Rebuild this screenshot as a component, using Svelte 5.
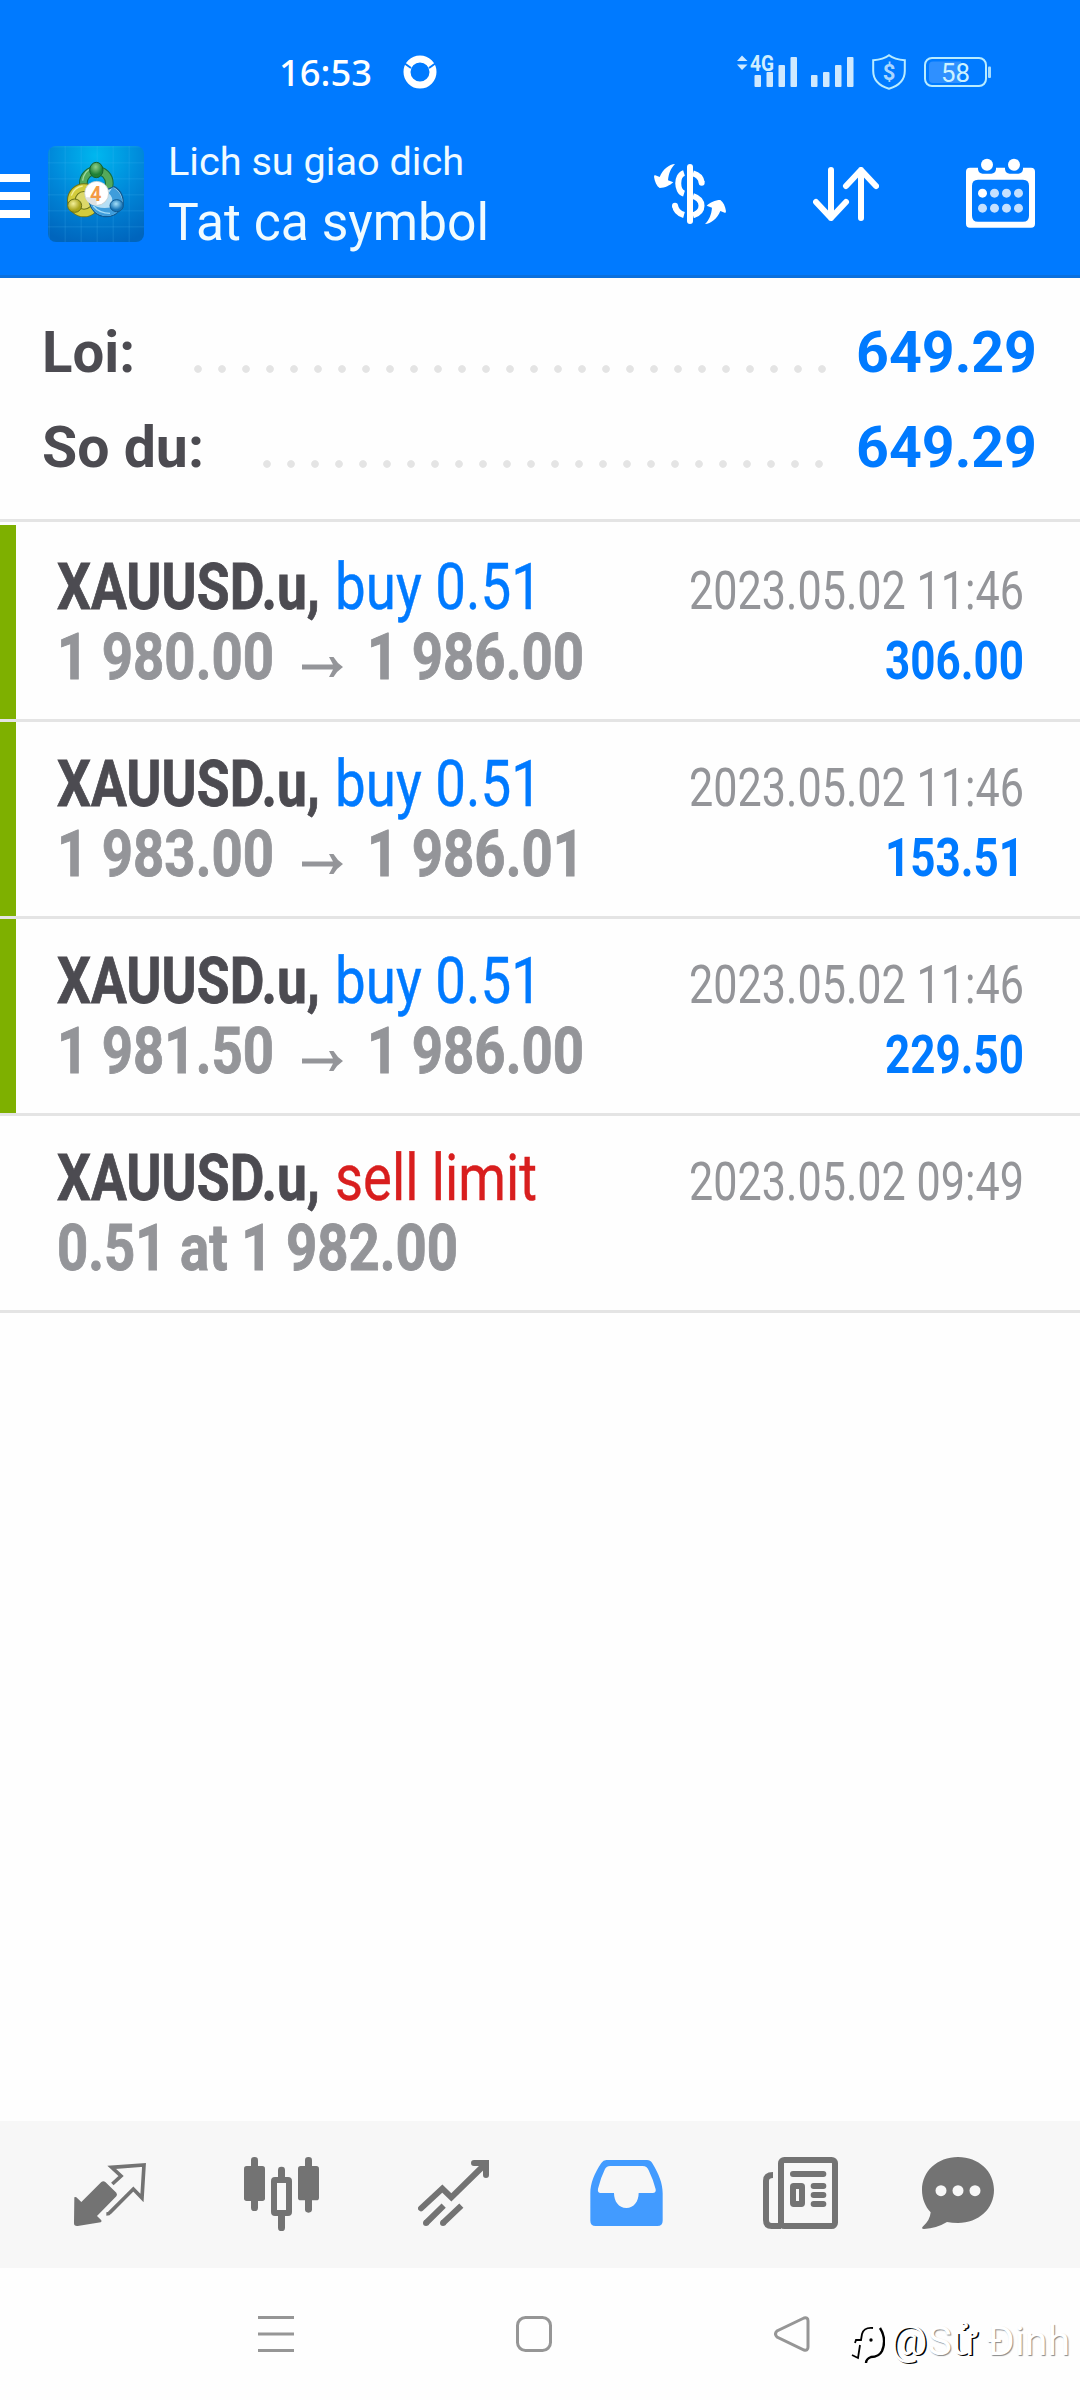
<script>
  const summary = [
    { label: 'Loi:', width: 93, value: '649.29' },
    { label: 'So du:', width: 162, value: '649.29', short: true },
  ];

  const deals = [
    { side: 'buy 0.51', sideWidth: 207, open: '1 980.00', close: '1 986.00', time: '2023.05.02 11:46', profit: '306.00' },
    { side: 'buy 0.51', sideWidth: 207, open: '1 983.00', close: '1 986.01', time: '2023.05.02 11:46', profit: '153.51' },
    { side: 'buy 0.51', sideWidth: 207, open: '1 981.50', close: '1 986.00', time: '2023.05.02 11:46', profit: '229.50' },
    { side: 'sell limit', sideWidth: 202, sell: true, note: '0.51 at 1 982.00', time: '2023.05.02 09:49' },
  ];
</script>

<!-- One line of condensed text; the box is as tall as the capitals. -->
{#snippet line(text, width, height, kind)}
  <svg class="line {kind}" {width} {height}>
    <text x="0" y={height} textLength={width} lengthAdjust="spacingAndGlyphs">{text}</text>
  </svg>
{/snippet}

<div class="screen">
  <header>
    <div class="status">
      <div class="clock">
        {@render line('16:53', 93, 27, 'time')}
        <svg class="ring" width="34" height="34" viewBox="0 0 34 34">
          <circle cx="17" cy="17" r="13" fill="none" stroke="#fff" stroke-width="7" />
          <path d="M1 8l7 5M33 8l-7 5" stroke="#007aff" stroke-width="2" />
        </svg>
      </div>
      <div class="signals">
        <svg width="60" height="36" viewBox="0 0 60 36" fill="#cfe9ff">
          <path d="M0 7L5 1.500L10.500 7zM0 10.500H10.500L5 16z" />
          <text class="net" x="13" y="17" textLength="24" lengthAdjust="spacingAndGlyphs">4G</text>
          <rect x="17.500" y="21" width="6.500" height="12" rx="1" />
          <rect x="29.500" y="18" width="6.500" height="15" rx="1" />
          <rect x="41.500" y="11" width="6.500" height="22" rx="1" />
          <rect x="53.500" y="3" width="6.500" height="30" rx="1" />
        </svg>
        <svg width="43" height="36" viewBox="0 0 43 36" fill="#cfe9ff">
          <rect x="0" y="21" width="6.500" height="12" rx="1" />
          <rect x="12" y="18" width="6.500" height="15" rx="1" />
          <rect x="24" y="11" width="6.500" height="22" rx="1" />
          <rect x="36" y="3" width="6.500" height="30" rx="1" />
        </svg>
        <svg width="34" height="36" viewBox="0 0 34 36">
          <path d="M17 1.200C13 4.200 8 5.600 1.200 6.200V17C1.200 26 8 32 17 34.800C26 32 32.800 26 32.800 17V6.200C26 5.600 21 4.200 17 1.200Z" fill="none" stroke="#b9ecff" stroke-width="2" />
          <text class="coin" x="17" y="25.500" text-anchor="middle">$</text>
        </svg>
        <svg width="68" height="36" viewBox="0 0 68 36">
          <rect x="1" y="4" width="61" height="28" rx="7" fill="none" stroke="#b9ecff" stroke-width="2" />
          <path d="M9 7.500H37V29H9Q5 29 5 25V11.500Q5 7.500 9 7.500Z" fill="#2f90ff" />
          <rect x="64" y="12.500" width="3" height="11.500" rx="1" fill="#a5dcff" />
          <text class="level" x="17" y="27.700" textLength="29" lengthAdjust="spacingAndGlyphs">58</text>
        </svg>
      </div>
    </div>

    <div class="appbar">
      <svg class="menu" width="30" height="44" viewBox="0 0 30 44" fill="#fff">
        <path d="M0 0h30v8H0zM0 18h30v8H0zM0 36h30v8H0z" />
      </svg>
      <svg class="logo" width="96" height="96" viewBox="54 48 288 288">
        <defs>
          <radialGradient id="sky" cx="50%" cy="10%" r="95%">
            <stop offset="0" stop-color="#00b7ef" />
            <stop offset=".5" stop-color="#0089da" />
            <stop offset="1" stop-color="#0065bd" />
          </radialGradient>
          <pattern id="grid" x="56" y="49" width="48" height="48" patternUnits="userSpaceOnUse">
            <path d="M0 1H48M1 0V48" stroke="#4db8f0" stroke-opacity=".35" stroke-width="2" />
          </pattern>
          <radialGradient id="green" cx="45%" cy="30%"><stop offset="0" stop-color="#8fd08b" /><stop offset="1" stop-color="#1f8136" /></radialGradient>
          <radialGradient id="yellow" cx="40%" cy="35%"><stop offset="0" stop-color="#f4f09a" /><stop offset="1" stop-color="#aaa41a" /></radialGradient>
          <radialGradient id="blue" cx="45%" cy="35%"><stop offset="0" stop-color="#a5e0fa" /><stop offset="1" stop-color="#1673b5" /></radialGradient>
        </defs>
        <rect x="54" y="48" width="288" height="288" rx="24" fill="url(#sky)" />
        <rect x="54" y="48" width="288" height="288" rx="24" fill="url(#grid)" />
        <circle cx="199" cy="160" r="39" fill="none" stroke="#176b38" stroke-width="26" />
        <circle cx="199" cy="160" r="39" fill="none" stroke="#54a95b" stroke-width="20" />
        <path d="M158 152Q162 123 184 116" fill="none" stroke="#a0d8a0" stroke-width="4" />
        <circle cx="162" cy="211" r="38" fill="#dcd86a" stroke="#6c7418" stroke-width="26" />
        <circle cx="162" cy="211" r="38" fill="none" stroke="#d3cc3c" stroke-width="20" />
        <path d="M124 197Q132 172 158 168" fill="none" stroke="#f2ee9a" stroke-width="4" />
        <path d="M205 190L252 170A51 51 0 0 1 278 228Q260 262 222 260Q188 254 178 218Z" fill="#b5dff5" stroke="#105a92" stroke-width="4" />
        <path d="M248 172A51 51 0 0 1 276 228L246 222Q250 200 236 190Z" fill="#3f9ddb" />
        <path d="M180 218Q206 240 244 232L266 244Q244 262 218 257Q188 249 180 218Z" fill="#3f9ddb" />
        <path d="M190 228Q208 250 240 250" fill="none" stroke="#a3dcf7" stroke-width="4" />
        <ellipse cx="199" cy="120" rx="20" ry="23" fill="url(#green)" stroke="#17602d" stroke-width="3" />
        <ellipse cx="134" cy="227" rx="21" ry="20" fill="url(#yellow)" stroke="#6c7418" stroke-width="3" />
        <ellipse cx="260" cy="227" rx="20" ry="18" fill="url(#blue)" stroke="#105a92" stroke-width="3" />
        <circle cx="200" cy="190" r="36" fill="#fff" stroke="#b9c4c4" stroke-width="2" />
        <path d="M164 202H200V226A36 36 0 0 1 166 202Z" fill="#dfe1e2" />
        <text class="four" x="197" y="212" text-anchor="middle">4</text>
      </svg>
      <div class="titles">
        {@render line('Lich su giao dich', 296, 28, 'subtitle')}
        {@render line('Tat ca symbol', 321, 36.5, 'title')}
      </div>
      <div class="actions">
        <svg width="72" height="60" viewBox="102 402 216 180" fill="none" stroke="#fff" stroke-width="18">
          <path d="M210 411V573" stroke-linecap="round" />
          <path d="M192 429C169 436 169 484 192 491M219 498C253 509 253 546 219 556" />
          <path d="M219 430C234 434 243 444 245 457" />
          <circle cx="245" cy="458" r="9" fill="#fff" stroke="none" />
          <path d="M165 526C167 542 178 551 192 555" />
          <circle cx="165" cy="527" r="9" fill="#fff" stroke="none" />
          <path id="swing" d="M165 402C148 403 128 418 119 441L104 435L102 440C104 455 110 468 119 474C135 474 150 466 160 457L144 451C146 430 152 415 165 402Z" fill="#fff" stroke="none" />
          <use href="#swing" transform="rotate(180 210 492)" />
        </svg>
        <svg width="66" height="54" viewBox="579 411 198 162" fill="none" stroke="#fff" stroke-width="18" stroke-linecap="round" stroke-linejoin="round">
          <path d="M633 420V564M588 516L633 564L678 516M723 564V420M678 468L723 420L768 468" />
        </svg>
        <svg width="69" height="72" viewBox="1038 382 207 216" fill="#fff">
          <path fill-rule="evenodd" d="M1050 411H1074V416Q1076 429 1088 429H1114Q1126 429 1128 416V411H1155V416Q1157 429 1169 429H1195Q1207 429 1209 416V411H1233Q1245 411 1245 423V579Q1245 591 1233 591H1050Q1038 591 1038 579V423Q1038 411 1050 411ZM1074 447Q1056 447 1056 465V555Q1056 573 1074 573H1209Q1227 573 1227 555V465Q1227 447 1209 447Z" />
          <circle cx="1101" cy="402" r="18" /><circle cx="1182" cy="402" r="18" />
          <circle cx="1087.500" cy="487.500" r="13.500" />
          <g fill="#c4e0ff">
            <circle cx="1123.500" cy="487.500" r="13.500" /><circle cx="1159.500" cy="487.500" r="13.500" /><circle cx="1195.500" cy="487.500" r="13.500" />
            <circle cx="1087.500" cy="532.500" r="13.500" /><circle cx="1123.500" cy="532.500" r="13.500" /><circle cx="1159.500" cy="532.500" r="13.500" /><circle cx="1195.500" cy="532.500" r="13.500" />
          </g>
        </svg>
      </div>
    </div>
  </header>

  <section class="summary">
    {#each summary as item}
      <div class="total">
        {@render line(item.label, item.width, 41, 'label')}
        <i class="leader" class:short={item.short}></i>
        {@render line(item.value, 181, 41, 'value')}
      </div>
    {/each}
  </section>

  <main>
    {#each deals as deal}
      <article class:marked={!deal.sell}>
        <div class="row">
          {@render line('XAUUSD.u,', 263, 46, 'symbol')}
          {@render line(deal.side, deal.sideWidth, 46, deal.sell ? 'sell' : 'buy')}
          {@render line(deal.time, 335, 38, 'date')}
        </div>
        <div class="row second">
          {#if deal.note}
            {@render line(deal.note, 401, 46, 'price')}
          {:else}
            {@render line(deal.open, 217, 46, 'price')}
            <svg class="arrow" width="41" height="20" viewBox="0 0 41 20" fill="#949599">
              <path d="M0 7.500H31L27 0H31.500Q35 6 41 10Q35 14 31.500 20H27L31 12.500H0Z" />
            </svg>
            {@render line(deal.close, 217, 46, 'price')}
            {@render line(deal.profit, 139, 38, 'profit')}
          {/if}
        </div>
      </article>
    {/each}
  </main>

  <nav class="tabs">
    <svg width="72" height="74" viewBox="102 141 216 222" fill="#737373">
      <path d="M103 262Q106 260 109 262L124 276L184 216Q190 211 196 216L229 248Q233 254 229 259L171 318L184 331Q186 335 182 337L113 348Q102 349 102 340Z" />
      <path d="M217 222L243 198L215 172L312 165L306 264L280 237L210 307Q207 312 199 312" fill="none" stroke="#737373" stroke-width="11" />
    </svg>
    <svg width="75" height="74" viewBox="612 141 225 222" fill="#737373">
      <rect x="612" y="168" width="63" height="105" rx="8" /><rect x="633" y="141" width="21" height="162" rx="10" />
      <rect x="774" y="168" width="63" height="103" rx="8" /><rect x="795" y="141" width="21" height="167" rx="10" />
      <rect x="714" y="170" width="21" height="60" rx="10" /><rect x="714" y="300" width="21" height="63" rx="10" />
      <rect x="702" y="210" width="45" height="99" rx="3" fill="#f7f7f7" stroke="#737373" stroke-width="18" />
      <rect x="711" y="219" width="27" height="81" rx="9" fill="#f7f7f7" />
    </svg>
    <svg width="71" height="74" viewBox="1134 141 213 222" fill="none" stroke="#737373" stroke-width="18">
      <path d="M1143 295L1207 236L1234 262L1336 162" stroke-linecap="round" stroke-linejoin="miter" />
      <path d="M1302 159H1338V195" stroke-linecap="round" />
      <path d="M1211 287L1158 339M1264 287L1209 339" />
      <circle cx="1158" cy="339" r="9" fill="#737373" stroke="none" /><circle cx="1209" cy="339" r="9" fill="#737373" stroke="none" />
    </svg>
    <svg width="73" height="74" viewBox="90 141 219 222" fill="#429bff">
      <path fill-rule="evenodd" d="M139 150H261Q271 150 277 160C297 193 308 220 308 250V332Q308 348 292 348H107Q91 348 91 332V250C91 220 103 190 124 159Q130 150 139 150ZM150 168Q140 168 135 177Q122 203 114 236Q112 249 122 249H162C162 274 176 294 199 294S236 274 236 249H278Q289 249 287 238Q280 210 266 181Q261 168 248 168Z" />
    </svg>
    <svg width="75" height="74" viewBox="608 141 225 222" fill="none" stroke="#737373" stroke-width="18">
      <rect x="662" y="150" width="162" height="198" rx="10" />
      <path d="M638 195Q617 195 617 212V330Q617 348 634 348H662" />
      <path d="M698 192H789M760 228H789M760 255H789M760 282H789" stroke-linecap="round" />
      <rect x="698" y="228" width="27" height="54" rx="2" />
    </svg>
    <svg width="72" height="74" viewBox="1086 141 216 222" fill="#737373">
      <path d="M1194 141C1256 141 1302 184 1302 240S1256 339 1194 339Q1176 339 1161 336Q1130 355 1092 357Q1083 356 1088 350Q1110 332 1112 307C1096 290 1086 266 1086 240C1086 184 1132 141 1194 141Z" />
      <g fill="#f7f7f7"><circle cx="1143" cy="242" r="16.500" /><circle cx="1194" cy="242" r="16.500" /><circle cx="1245" cy="242" r="16.500" /></g>
    </svg>
  </nav>

  <footer>
    <svg width="36" height="36" viewBox="0 0 36 36"><path d="M0 1.500H36M0 18H36M0 34.500H36" /></svg>
    <svg width="36" height="36" viewBox="0 0 36 36"><rect x="1.500" y="1.500" width="33" height="33" rx="8" /></svg>
    <svg width="36" height="36" viewBox="0 0 36 36"><path d="M30 2L3 15Q0 18 3 21L30 34Q34 35 34 31V5Q34 1 30 2Z" /></svg>
    <div class="credit">
      <svg width="34" height="40" viewBox="0 0 34 40" fill="none" stroke="#000" stroke-width="1.800">
        <path d="M22 3Q13 2 11 9L10 15H5L4 18M9 20L7 33L1 30" />
        <path d="M29 3Q36 14 31 26Q28 32 20 32Q15 34 15 38" stroke-width="2.400" />
        <circle cx="20" cy="15" r=".8" fill="#000" />
      </svg>
      <span><b>@</b>S<b>ử</b> Đinh</span>
    </div>
  </footer>
</div>

<style>
  :global(body) { background: #fefefe; }
  .screen { width: 1080px; height: 2400px; display: flex; flex-direction: column; background: #fefefe; font-family: Roboto, 'Noto Sans', sans-serif; overflow: hidden; }
  svg { display: block; flex: none; }
  .line { overflow: visible; }

  header { height: 278px; box-sizing: border-box; background: #007aff; border-bottom: 3px solid #0a70de; }
  .status { height: 80px; padding: 32px 88px 0 279px; display: flex; align-items: center; justify-content: space-between; }
  .clock { display: flex; align-items: center; gap: 31px; }
  .time { font: 500 37px 'Noto Sans', sans-serif; fill: #fff; }
  .signals { display: flex; align-items: center; }
  .signals svg:nth-child(2) { margin-left: 14px; }
  .signals svg:nth-child(3) { margin-left: 18px; }
  .signals svg:nth-child(4) { margin-left: 18px; }
  .net { font: 700 22px Roboto, sans-serif; fill: #cfeeff; }
  .coin { font: 700 22px Roboto, sans-serif; fill: #a9d6ff; }
  .level { font: 400 25px Roboto, sans-serif; fill: #cdf2ff; }

  .appbar { height: 163px; display: flex; align-items: center; padding-right: 45px; }
  .menu { margin-top: 5px; }
  .logo { margin-left: 18px; }
  .four { font: 700 60px Roboto, sans-serif; fill: #f39a44; }
  .titles { margin-left: 24px; display: flex; flex-direction: column; gap: 28px; }
  .subtitle { font-size: 39.5px; fill: #f0fbff; }
  .title { font-size: 51px; fill: #f0fbff; }
  .actions { margin-left: auto; display: flex; align-items: center; gap: 87px; }

  .summary { height: 244px; box-sizing: border-box; border-bottom: 3px solid #e4e4e4; padding: 53px 43px 0 42px; display: flex; flex-direction: column; gap: 54px; }
  .total { display: flex; align-items: flex-end; }
  .label { font-size: 57.5px; font-weight: 700; fill: #4c4b51; }
  .value { font-size: 57.5px; font-weight: 700; fill: #007aff; margin-left: 22px; }
  .leader { width: 648px; height: 8px; margin-left: auto; margin-bottom: -1px; background: radial-gradient(circle, #e4e4e4 3.4px, transparent 4.2px) 0 0 / 24px 8px; }
  .leader.short { width: 576px; margin-right: 3px; }

  main { flex: 1; padding-top: 3px; }
  article { height: 197px; box-sizing: border-box; padding: 38px 56px 0 57px; border-bottom: 3px solid #e4e4e4; }
  .marked { background: linear-gradient(#7eb000, #7eb000) 0 0 / 16px 194px no-repeat padding-box; }
  .row { display: flex; align-items: flex-end; height: 46px; }
  .second { margin-top: 24px; }
  .symbol { font-size: 64.5px; font-weight: 700; fill: #4c4b51; stroke: #4c4b51; stroke-width: .8px; }
  .buy, .sell { font-size: 64.5px; margin-left: 15px; }
  .buy { fill: #007aff; stroke: #007aff; stroke-width: .4px; }
  .sell { fill: #d81e1e; stroke: #d81e1e; stroke-width: .4px; }
  .date { font-size: 53.5px; fill: #949599; margin-left: auto; }
  .price { font-size: 64.5px; font-weight: 700; fill: #949599; stroke: #949599; stroke-width: .9px; }
  .arrow { margin: 0 24px 2px 28px; }
  .profit { font-size: 53.5px; font-weight: 700; fill: #007aff; margin-left: auto; }

  .tabs { height: 147px; padding-left: 24px; display: grid; grid-template-columns: 172px 171px 173px 173px 174px 142px; align-items: center; justify-items: center; background: #f7f7f7; }
  .tabs svg { margin-bottom: 1px; }
  footer { position: relative; height: 132px; padding-left: 258px; display: flex; align-items: center; gap: 222px; fill: none; stroke: #969696; stroke-width: 3; }
  .credit { position: absolute; right: 10px; top: 49px; display: flex; align-items: center; gap: 6px; color: #fff; stroke: none; font-size: 41px; white-space: nowrap; text-shadow: 1px 1px 1px #888; }
  .credit svg { margin-top: 7px; }
  .credit b { font-weight: 400; text-shadow: 1.5px 1px 0 #000; }
</style>
